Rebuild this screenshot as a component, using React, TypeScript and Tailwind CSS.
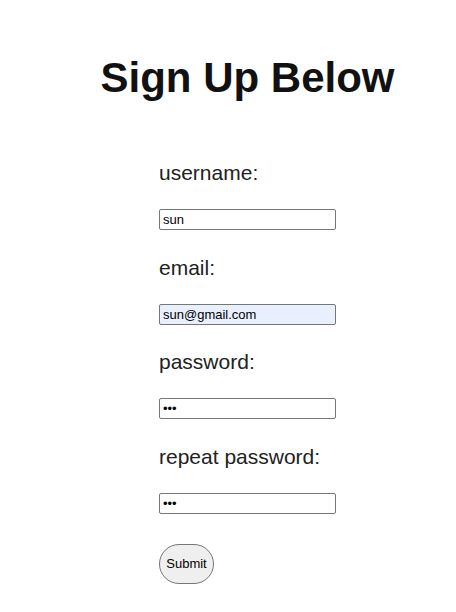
export default function App() {
  const fields = [
    { label: "username:", value: "sun", type: "text", autofill: false, gap: "" },
    { label: "email:", value: "sun@gmail.com", type: "email", autofill: true, gap: "mt-[26px]" },
    { label: "password:", value: "abc", type: "password", autofill: false, gap: "mt-[25px]" },
    { label: "repeat password:", value: "abc", type: "password", autofill: false, gap: "mt-[26px]" },
  ];

  return (
    <div className="min-h-[612px] bg-white font-['Liberation_Sans',Arial,sans-serif] text-[#1a1a1a]">
      <h1 className="pl-[39px] pt-[54px] text-center text-[42px] font-bold leading-[48px] text-[#111]">
        Sign Up Below
      </h1>
      <form className="ml-[159px] mt-[59px] flex flex-col" onSubmit={(e) => e.preventDefault()}>
        {fields.map((f) => (
          <div key={f.label} className={`flex flex-col ${f.gap}`}>
            <label className="h-[24px] text-[21px] leading-[24px] text-[#222]">{f.label}</label>
            <input
              type={f.type}
              defaultValue={f.value}
              className={`mt-[24px] h-[21px] w-[177px] rounded-[2px] border border-[#767676] px-[3px] text-[13px] text-black outline-none ${
                f.autofill ? "bg-[#e8f0fe]" : "bg-white"
              }`}
            />
          </div>
        ))}
        <div className="mt-[30px]">
          <button
            type="submit"
            className="h-[40px] w-[55px] rounded-full border border-[#767676] bg-[#efefef] text-[13px] text-black"
          >
            Submit
          </button>
        </div>
      </form>
    </div>
  );
}
